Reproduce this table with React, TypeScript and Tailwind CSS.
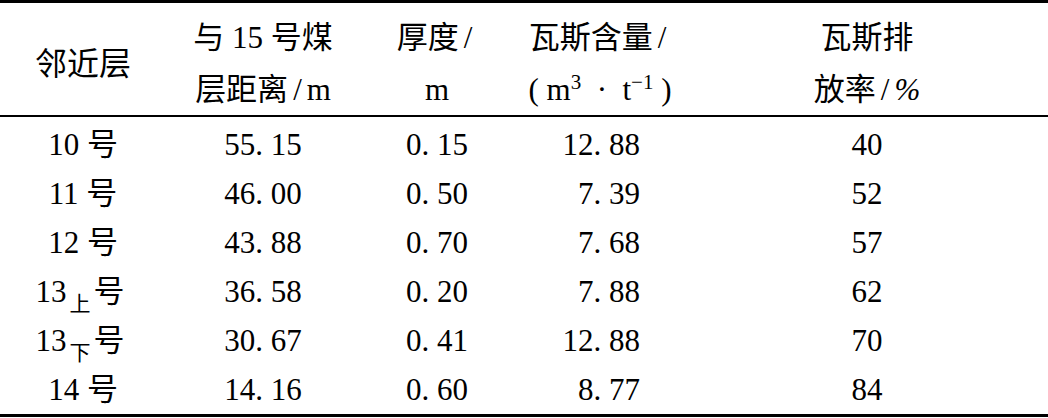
import React from 'react';

const rows = [
  { layer: '10', sub: '', dist: '55. 15', thick: '0. 15', gas: '12. 88', rate: '40' },
  { layer: '11', sub: '', dist: '46. 00', thick: '0. 50', gas: '7. 39', rate: '52' },
  { layer: '12', sub: '', dist: '43. 88', thick: '0. 70', gas: '7. 68', rate: '57' },
  { layer: '13', sub: '上', dist: '36. 58', thick: '0. 20', gas: '7. 88', rate: '62' },
  { layer: '13', sub: '下', dist: '30. 67', thick: '0. 41', gas: '12. 88', rate: '70' },
  { layer: '14', sub: '', dist: '14. 16', thick: '0. 60', gas: '8. 77', rate: '84' },
];

const cols = 'grid grid-cols-[166px_194px_154px_172px_1fr]';

function Slash() {
  return <span className="px-[5px] font-light">/</span>;
}

export default function App() {
  return (
    <div
      className="w-[1048px] h-[418px] bg-white text-black text-[31px]"
      style={{ fontFamily: '"Liberation Serif", "Noto Sans CJK SC", serif' }}
    >
      <div className="border-t-[3px] border-b-[2px] border-black">
        <div className={`${cols} h-[112px] pt-[9px] leading-[52px]`}>
          <div className="flex items-center justify-center text-[32px]">邻近层</div>
          <div className="flex flex-col items-center">
            <span>与 15 号煤</span>
            <span>
              层距离<Slash />m
            </span>
          </div>
          <div className="flex flex-col items-center">
            <span>
              厚度<Slash />
            </span>
            <span>m</span>
          </div>
          <div className="flex flex-col items-center">
            <span>
              瓦斯含量<Slash />
            </span>
            <span className="whitespace-pre">
              ( m<sup className="text-[21px] -top-[11px]">3</sup>  ·  t
              <sup className="text-[21px] -top-[11px]">−1</sup> )
            </span>
          </div>
          <div className="flex flex-col items-center">
            <span>瓦斯排</span>
            <span>
              放率<Slash />
              <span className="italic">%</span>
            </span>
          </div>
        </div>
      </div>

      <div className="border-b-[3px] border-black pt-[3px] h-[300px]">
        {rows.map((r, i) => (
          <div key={i} className={`${cols} h-[49px] leading-[49px]`}>
            <div className={r.sub ? 'text-center pr-[6px]' : 'text-center'}>
              {r.layer}
              {r.sub ? (
                <span className="text-[21px] relative top-[9px] mx-[3px]">{r.sub}</span>
              ) : (
                ' '
              )}
              号
            </div>
            <div className="text-center">{r.dist}</div>
            <div className="text-center">{r.thick}</div>
            <div className="text-right pr-[46px]">{r.gas}</div>
            <div className="text-center">{r.rate}</div>
          </div>
        ))}
      </div>
    </div>
  );
}
